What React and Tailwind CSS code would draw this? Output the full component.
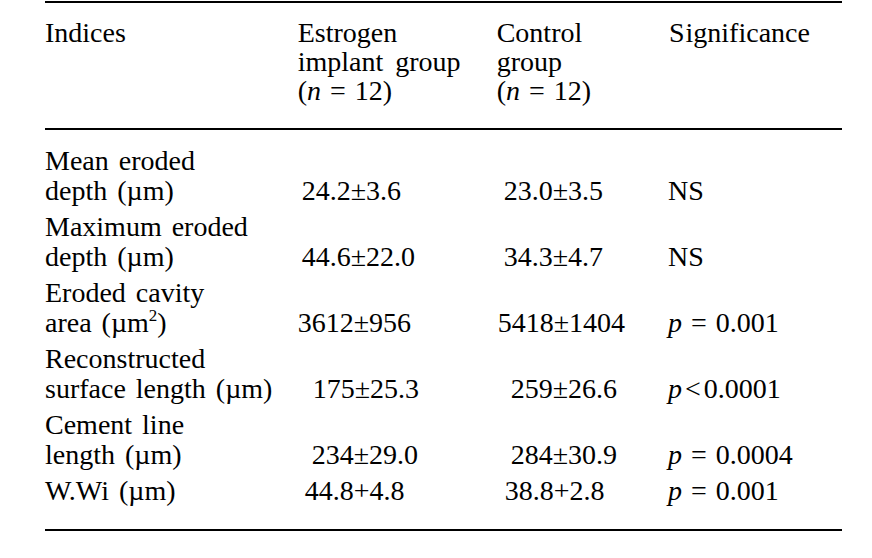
export default function App() {
  const rows = [
    { label: ["Mean eroded", "depth (µm)"], e: "24.2±3.6", ep: "pl-[4px]", c: "23.0±3.5", cp: "pl-[7px]", s: "NS" },
    { label: ["Maximum eroded", "depth (µm)"], e: "44.6±22.0", ep: "pl-[4px]", c: "34.3±4.7", cp: "pl-[7px]", s: "NS" },
    { label: ["Eroded cavity", "area"], sup: true, e: "3612±956", ep: "pl-0", c: "5418±1404", cp: "pl-px", s: "p1" },
    { label: ["Reconstructed", "surface length (µm)"], e: "175±25.3", ep: "pl-[15px]", c: "259±26.6", cp: "pl-[14px]", s: "p2" },
    { label: ["Cement line", "length (µm)"], e: "234±29.0", ep: "pl-[14px]", c: "284±30.9", cp: "pl-[14px]", s: "p3" },
    { label: ["W.Wi (µm)"], e: "44.8+4.8", ep: "pl-[7px]", c: "38.8+2.8", cp: "pl-[8px]", s: "p1", single: true },
  ];

  const sig = (s) => {
    if (s === "NS") return <span>NS</span>;
    if (s === "p1")
      return (
        <span>
          <i>p</i> = 0.001
        </span>
      );
    if (s === "p2")
      return (
        <span className="[word-spacing:0px]">
          <i>p</i>
          <span className="ml-[3px] mr-[3px]">&lt;</span>0.0001
        </span>
      );
    return (
      <span>
        <i>p</i> = 0.0004
      </span>
    );
  };

  return (
    <div className="w-[872px] h-[558px] bg-white text-black text-[28px] font-['Liberation_Serif','Times_New_Roman',serif] overflow-hidden">
      <div className="ml-[45px] w-[797px] pt-px">
        <div className="grid grid-cols-[252.7px_199px_173.3px_1fr] border-t-2 border-b-2 border-black pt-[15px] pb-[23px] leading-[29px] [word-spacing:2px]">
          <div>Indices</div>
          <div>
            Estrogen
            <br />
            <span className="[word-spacing:5px]">implant group</span>
            <br />(<i>n</i> = 12)
          </div>
          <div>
            Control
            <br />
            group
            <br />(<i>n</i> = 12)
          </div>
          <div className="-ml-px">
            S<span className="ml-px">ignificance</span>
          </div>
        </div>
        <div className="flex flex-col gap-[6px] border-b-2 border-black pt-[15.5px] pb-[23.5px] leading-[30px]">
          {rows.map((r, i) => (
            <div
              key={i}
              className="grid grid-cols-[252.7px_199px_173.3px_1fr] items-end"
            >
              <div className="[word-spacing:3px]">
                {r.label.length === 2 ? (
                  <>
                    {r.label[0]}
                    <br />
                    {r.sup ? (
                      <>
                        area (µm
                        <span className="relative -top-[11px] text-[17px] leading-none">2</span>)
                      </>
                    ) : (
                      r.label[1]
                    )}
                  </>
                ) : (
                  r.label[0]
                )}
              </div>
              <div className={r.ep}>{r.e}</div>
              <div className={r.cp}>{r.c}</div>
              <div className="-ml-[2px] [word-spacing:2px]">{sig(r.s)}</div>
            </div>
          ))}
        </div>
      </div>
    </div>
  );
}
